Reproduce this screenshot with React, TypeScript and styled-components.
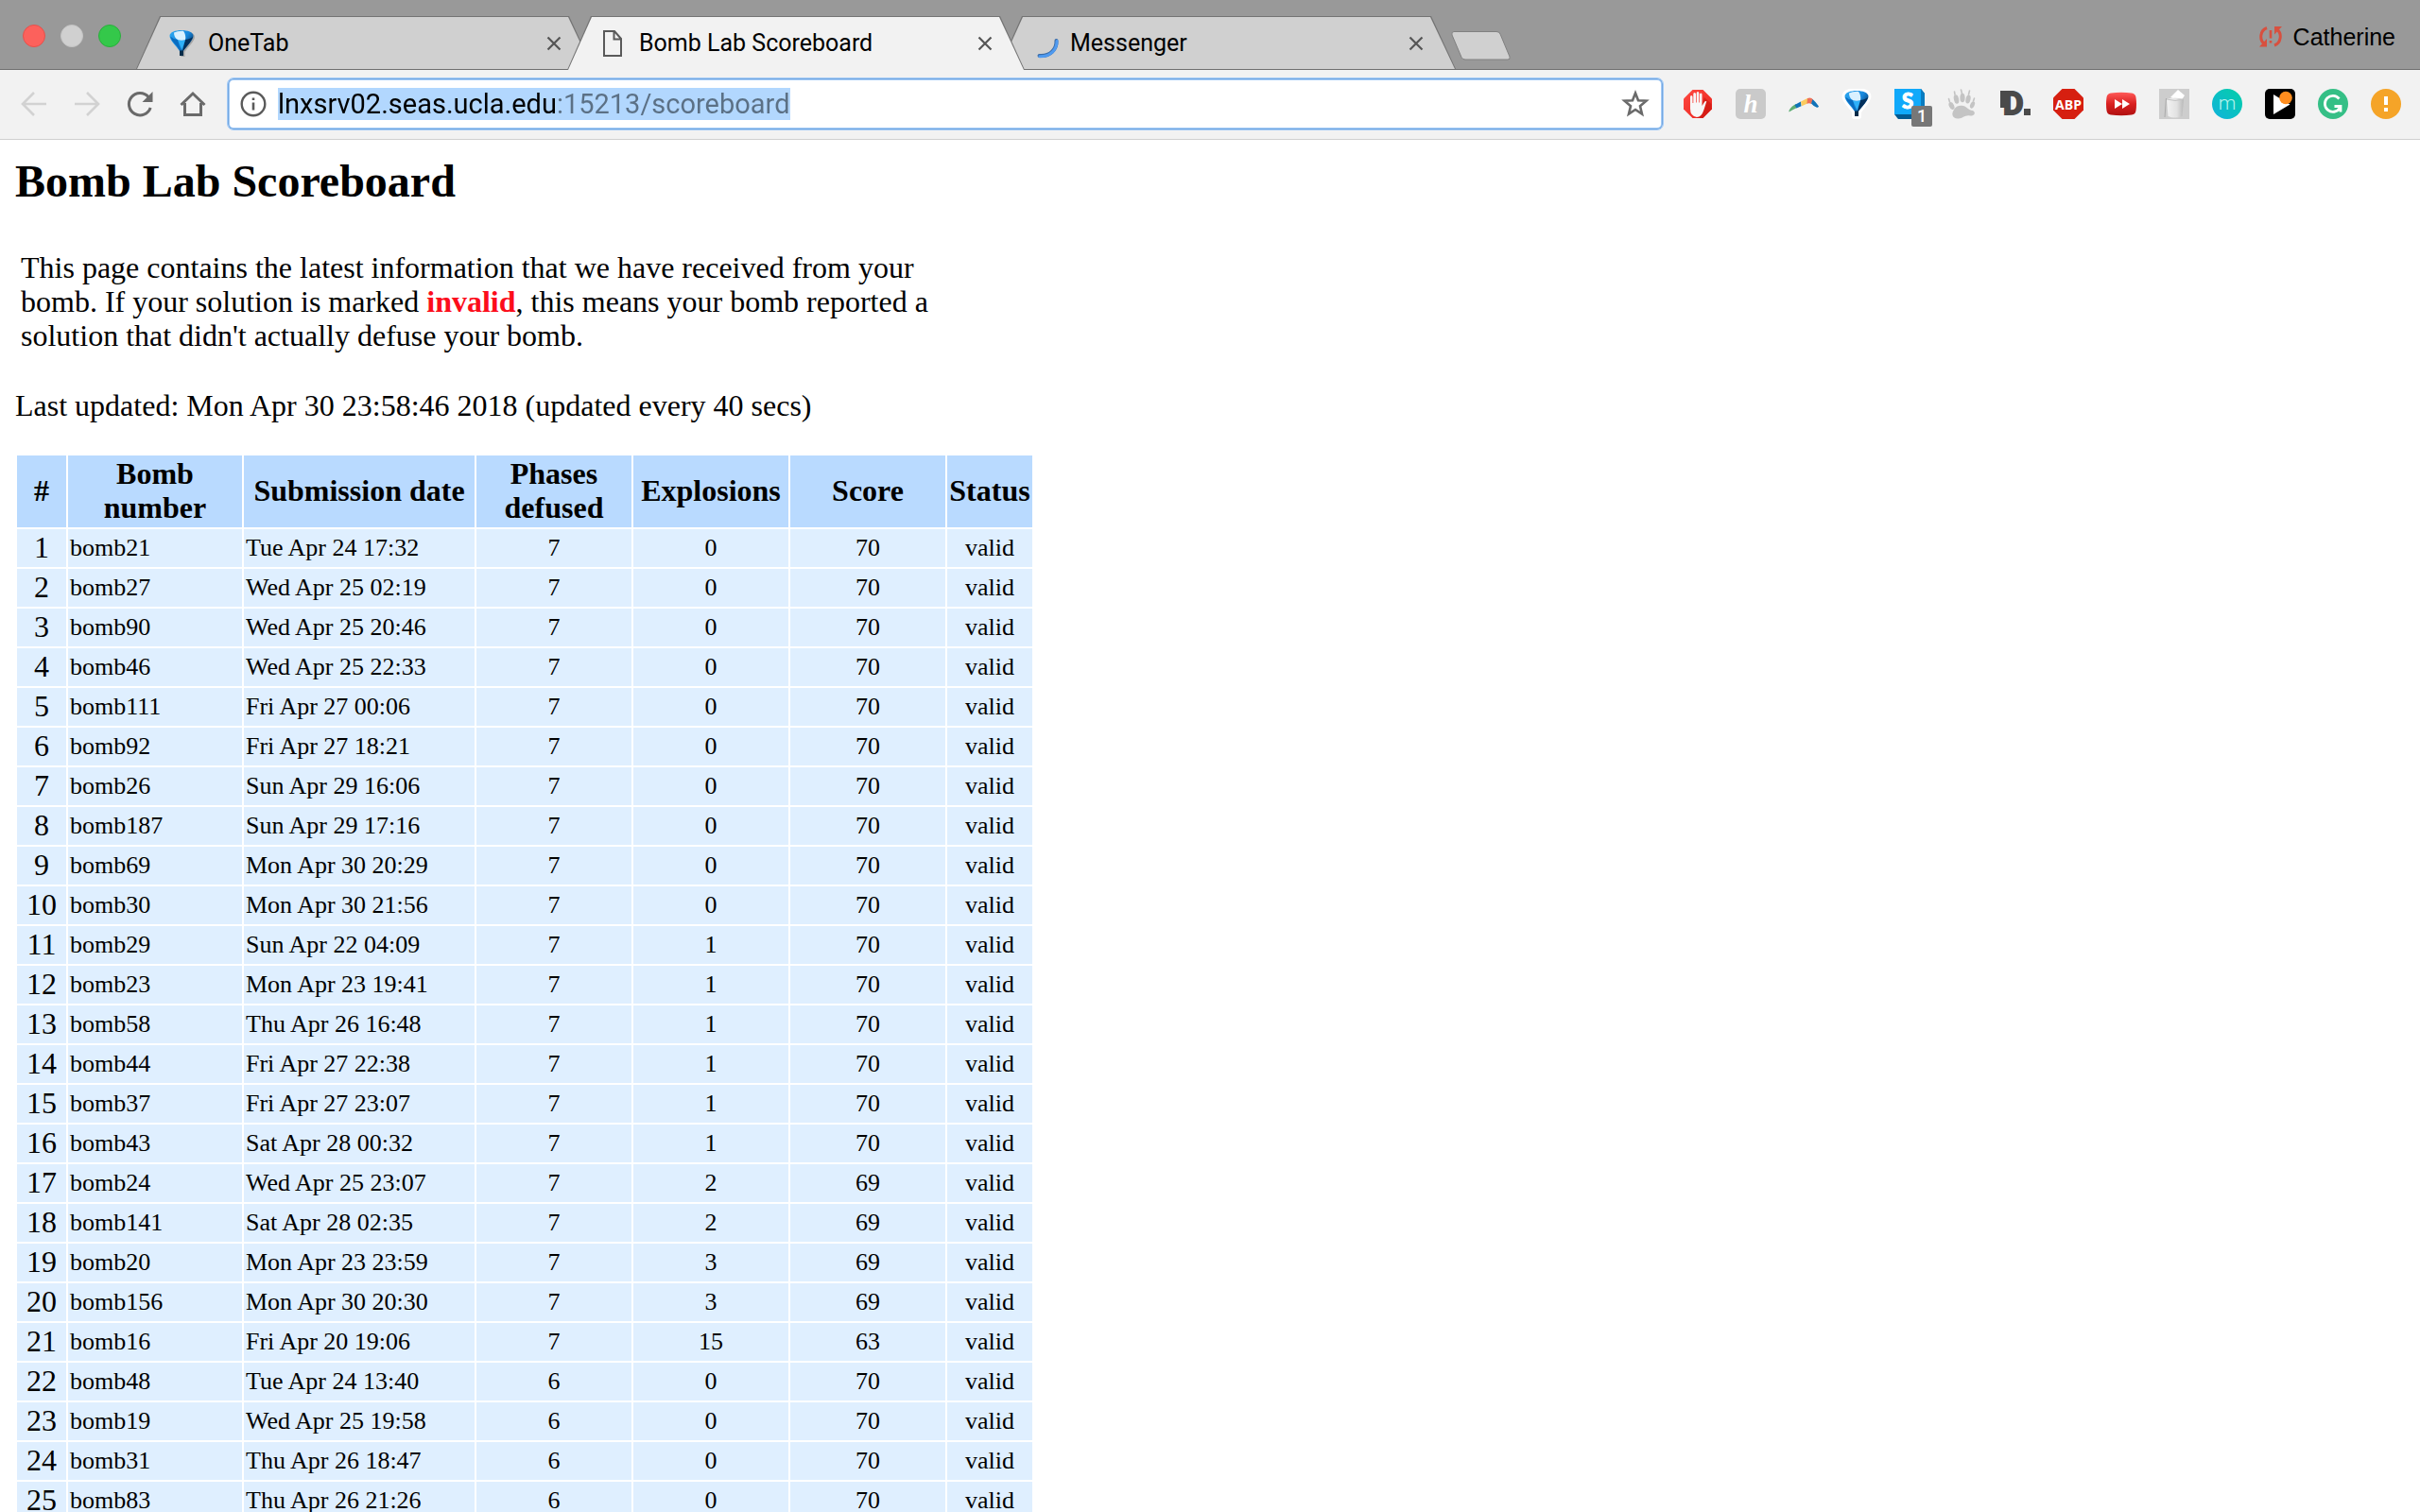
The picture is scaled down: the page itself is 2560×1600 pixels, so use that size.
import React from "react";
import styled, { createGlobalStyle, css } from "styled-components";

const sans = `Roboto, "Liberation Sans", sans-serif`;
const serif = `"Liberation Serif", "Times New Roman", serif`;

const GlobalStyle = createGlobalStyle`
  * { box-sizing: border-box; }
  body { margin: 0; background: #fff; color: #000; }
`;

const Window = styled.div`
  display: flex;
  flex-direction: column;
  height: 100vh;
  overflow: hidden;
`;

/* ---------- tab strip ---------- */

const TabStrip = styled.header`
  display: flex;
  align-items: flex-end;
  flex: none;
  height: 74px;
  padding: 0 26px 0 24px;
  background: #999;
  box-shadow: inset 0 -1px #6f6f6f;
  font-family: ${sans};
`;

const WindowButtons = styled.div`
  display: flex;
  gap: 16px;
  align-self: flex-start;
  margin-top: 26px;
  width: 120px;
`;

const Light = styled.button<{ $fill: string; $edge: string }>`
  width: 24px;
  height: 24px;
  padding: 0;
  border: 1px solid ${(p) => p.$edge};
  border-radius: 50%;
  background: ${(p) => p.$fill};
`;

const Tabs = styled.nav`
  display: flex;
  align-items: flex-end;
  flex: 0 1 1396px;
  min-width: 0;
`;

const slant = "polygon(25px 0, calc(100% - 26px) 0, 100% 100%, 0 100%)";

const Tab = styled.div<{ $active?: boolean }>`
  position: relative;
  isolation: isolate;
  display: flex;
  align-items: center;
  flex: 1 1 0;
  min-width: 0;
  height: 57px;
  padding: 0 32px;
  z-index: ${(p) => (p.$active ? 2 : 1)};
  & + & { margin-left: -28px; }
  &::before, &::after {
    content: "";
    position: absolute;
    z-index: -1;
    clip-path: ${slant};
  }
  &::before { inset: 0 0 ${(p) => (p.$active ? 0 : 1)}px; background: #747474; }
  &::after {
    inset: 1px 1px ${(p) => (p.$active ? 0 : 1)}px;
    background: ${(p) => (p.$active ? "#f2f2f2" : "#d0d0d0")};
  }
`;

const TabTitle = styled.a`
  flex: 1;
  margin-left: 12px;
  overflow: hidden;
  white-space: nowrap;
  font-size: 25px;
  line-height: 32px;
  color: #000;
  text-decoration: none;
`;

const IconButton = styled.button<{ $size: number }>`
  display: grid;
  place-items: center;
  flex: none;
  width: ${(p) => p.$size}px;
  height: ${(p) => p.$size}px;
  padding: 0;
  border: 0;
  background: none;
`;

const NewTab = styled.button`
  align-self: flex-start;
  flex: none;
  width: 66px;
  height: 32px;
  margin: 32px auto 0 -7px;
  padding: 0;
  border: 0;
  background: none;
`;

const Profile = styled.button`
  display: flex;
  align-items: center;
  gap: 12px;
  align-self: flex-start;
  margin-top: 23px;
  padding: 0;
  border: 0;
  background: none;
  font: 25px/32px "Liberation Sans", Arial, sans-serif;
  color: #000;
`;

/* ---------- toolbar ---------- */

const Toolbar = styled.div`
  display: flex;
  align-items: center;
  flex: none;
  height: 74px;
  padding: 0 20px 1px 16px;
  gap: 20px;
  background: #f2f2f2;
  border-bottom: 1px solid #d0d0d0;
`;

const Navigation = styled.div`
  display: flex;
  gap: 16px;
  margin-right: -4px;
`;

const AddressBar = styled.label`
  display: flex;
  align-items: center;
  flex: 1;
  height: 56px;
  padding: 0 12px 0 11px;
  border: 1px solid #a5ccf7;
  border-radius: 7px;
  background: #fff;
  box-shadow: inset 0 0 0 1px #74a7e0, inset 0 0 0 2px #a5ccf7;
`;

const domainWidth = 295;

const Address = styled.input`
  field-sizing: content;
  height: 34px;
  margin: 0 auto 0 10px;
  padding: 0;
  border: 0;
  outline: 0;
  font: 29px/34px ${sans};
  color: transparent;
  background:
    linear-gradient(90deg, #000 ${domainWidth}px, #5b7085 ${domainWidth}px) text,
    #b2d7fe;
  background-clip: text, border-box;
`;

const Extensions = styled.div`
  display: flex;
  gap: 24px;
`;

const Extension = styled.button`
  position: relative;
  width: 32px;
  height: 32px;
  padding: 0;
  border: 0;
  background: none;
  svg { display: block; }
`;

const Badge = styled.span`
  position: absolute;
  left: 18px;
  top: 18px;
  width: 22px;
  height: 22px;
  border-radius: 2px;
  background: #777;
  color: #fff;
  font: 500 18px/22px ${sans};
  text-align: center;
`;

/* ---------- page ---------- */

const Page = styled.main`
  flex: 1;
  min-height: 0;
  overflow: hidden;
  padding: 16px;
  font: 32px/36px ${serif};
`;

const Heading = styled.h2`
  margin: 0 0 40px;
  font-size: 48px;
  line-height: 55px;
`;

const Intro = styled.p`
  max-width: 1012px;
  margin: 0 0 32px;
  padding: 6px;
`;

const Invalid = styled.b`
  color: #fc0d1b;
`;

const Updated = styled.p`
  margin: 0 0 32px;
  line-height: 37px;
`;

const Scoreboard = styled.table`
  table-layout: fixed;
  width: 1078px;
  border-spacing: 2px;
`;

const Col = styled.col<{ $width: number }>`
  width: ${(p) => p.$width}px;
`;

const HeadCell = styled.th`
  padding: 1px 2px 3px;
  background: #b9daff;
`;

const cell = css`
  height: 40px;
  background: #dfefff;
`;

const Rank = styled.td`
  ${cell}
  padding: 1px 2px 3px;
  text-align: center;
`;

const Cell = styled.td<{ $left?: boolean }>`
  ${cell}
  padding: 2px;
  font-size: 26px;
  text-align: ${(p) => (p.$left ? "left" : "center")};
`;

const columns: [string, number][] = [
  ["#", 52],
  ["Bomb number", 184],
  ["Submission date", 244],
  ["Phases defused", 164],
  ["Explosions", 164],
  ["Score", 164],
  ["Status", 90],
];

const rows: [string, string, number, number, number][] = [
  ["bomb21", "Tue Apr 24 17:32", 7, 0, 70],
  ["bomb27", "Wed Apr 25 02:19", 7, 0, 70],
  ["bomb90", "Wed Apr 25 20:46", 7, 0, 70],
  ["bomb46", "Wed Apr 25 22:33", 7, 0, 70],
  ["bomb111", "Fri Apr 27 00:06", 7, 0, 70],
  ["bomb92", "Fri Apr 27 18:21", 7, 0, 70],
  ["bomb26", "Sun Apr 29 16:06", 7, 0, 70],
  ["bomb187", "Sun Apr 29 17:16", 7, 0, 70],
  ["bomb69", "Mon Apr 30 20:29", 7, 0, 70],
  ["bomb30", "Mon Apr 30 21:56", 7, 0, 70],
  ["bomb29", "Sun Apr 22 04:09", 7, 1, 70],
  ["bomb23", "Mon Apr 23 19:41", 7, 1, 70],
  ["bomb58", "Thu Apr 26 16:48", 7, 1, 70],
  ["bomb44", "Fri Apr 27 22:38", 7, 1, 70],
  ["bomb37", "Fri Apr 27 23:07", 7, 1, 70],
  ["bomb43", "Sat Apr 28 00:32", 7, 1, 70],
  ["bomb24", "Wed Apr 25 23:07", 7, 2, 69],
  ["bomb141", "Sat Apr 28 02:35", 7, 2, 69],
  ["bomb20", "Mon Apr 23 23:59", 7, 3, 69],
  ["bomb156", "Mon Apr 30 20:30", 7, 3, 69],
  ["bomb16", "Fri Apr 20 19:06", 7, 15, 63],
  ["bomb48", "Tue Apr 24 13:40", 6, 0, 70],
  ["bomb19", "Wed Apr 25 19:58", 6, 0, 70],
  ["bomb31", "Thu Apr 26 18:47", 6, 0, 70],
  ["bomb83", "Thu Apr 26 21:26", 6, 0, 70],
];

/* ---------- drawings ---------- */

const Svg = ({ size = 32, children }: { size?: number; children: React.ReactNode }) => (
  <svg width={size} height={size} viewBox={`0 0 ${size} ${size}`} fill="none" aria-hidden="true">
    {children}
  </svg>
);

const Balloon = ({ id, halo }: { id: string; halo?: boolean }) => {
  const shape = "M16 2C9.500 2 3.500 4 3.500 8C3.500 12.500 10 18 14 24V29H18V24C22 18 28.500 12.500 28.500 8C28.500 4 22.500 2 16 2Z";
  return (
    <Svg>
      <defs>
        <linearGradient id={id} x1="4" y1="4" x2="26" y2="20" gradientUnits="userSpaceOnUse">
          <stop offset="0" stopColor="#2ba6f0" />
          <stop offset=".6" stopColor="#1787dc" />
          <stop offset="1" stopColor="#053c70" />
        </linearGradient>
      </defs>
      <path d={shape} transform="translate(1.500 1)" fill="#0003" />
      {halo && <path d={shape} stroke="#fff" strokeWidth="6" strokeLinejoin="round" />}
      <path d={shape} fill={`url(#${id})`} />
      <path d="M20 12Q26 11 28 8.500Q27.500 13 17 24.500Z" fill="#04305c" />
      <path d="M4 8.500Q8 12 12 12L15 24Q10 17 6 13Z" fill="#0a6cc0" />
      <path d="M12 12Q16 13.500 20 12L16.500 23Z" fill="#2fb0f8" />
      <path d="M8 4.500Q12 2.500 18 2.800Q21 7 20 12Q16 13.500 12 12Q8 10 8 4.500Z" fill="#d9f1ff" />
      <path d="M14 23.500H18V29H14Z" fill="#062c49" />
    </Svg>
  );
};

const PageIcon = () => (
  <Svg>
    <path d="M7 3H18L25 11V29H7Z M17.500 3V11.500H25" stroke="#5a5a5a" strokeWidth="2" />
  </Svg>
);

const Spinner = () => (
  <Svg>
    <path d="M29.500 13C30 22 23 30 11.500 29" stroke="#3a6ba6" strokeWidth="4" strokeLinecap="round" />
    <path d="M30 13.500C30.300 22.500 23 30 12 29.800" stroke="#4f9af0" strokeWidth="3" strokeLinecap="round" />
  </Svg>
);

const Close = () => (
  <IconButton $size={20} aria-label="Close tab">
    <Svg size={20}>
      <path d="M3.500 3.500L16.500 16.500M16.500 3.500L3.500 16.500" stroke="#555" strokeWidth="2.200" />
    </Svg>
  </IconButton>
);

const octagon = "M10.500 1H21.500L31 10.500V21.500L21.500 31H10.500L1 21.500V10.500Z";

const extensionIcons: [string, React.ReactNode][] = [
  ["AdBlock", (
    <Svg>
      <defs>
        <linearGradient id="stop" x1="0" y1="0" x2="1" y2="1">
          <stop offset="0" stopColor="#ff4a42" />
          <stop offset="1" stopColor="#e8201a" />
        </linearGradient>
      </defs>
      <path d={octagon} fill="url(#stop)" />
      <path d="M23 9L30.500 16V21.500L21.500 31H15Z" fill="#c6160f" opacity=".6" />
      <path
        d="M8 17V8.500Q8 7 9.200 7T10.500 8.500V15H11.300V5.500Q11.300 4 12.600 4T14 5.500V14.500H14.700V4.500Q14.700 3 16 3T17.300 4.500V14.500H18V6Q18 4.500 19.300 4.500T20.500 6V18L23 14Q24 12.500 25.300 13.300L22.500 22Q20 30 15 30Q8 29 8 21Z"
        fill="#f7f7f7"
      />
    </Svg>
  )],
  ["Honey", (
    <Svg>
      <rect width="32" height="32" rx="5" fill="#cacaca" />
      <text x="16" y="25" textAnchor="middle" fill="#fff" fontFamily="Liberation Serif, serif" fontStyle="italic" fontWeight="700" fontSize="27">h</text>
    </Svg>
  )],
  ["Boomerang", (
    <Svg>
      <path d="M.5 23C2 19.500 5 17.500 8 16L9 20Q5 21.500 .5 24.500Z" fill="#5fae74" />
      <path d="M6.500 17L13 13.500L13.500 18.300L8.500 20.500Z" fill="#1072b8" />
      <path d="M13 13.500L20 10V15.500L14 18.300Z" fill="#fbcb5f" />
      <path d="M20 10Q24 8.500 26 11.500L24 16Q22 14.500 19.500 15.700Z" fill="#ee7057" />
      <path d="M25.500 11Q29 14 32 18.500Q31 20.500 29.500 19.500Q26 18 24 15.500Z" fill="#1072b8" />
    </Svg>
  )],
  ["OneTab", <Balloon id="balloon-ext" halo />],
  ["Skype", (
    <>
      <Svg>
        <path d="M0 0H28L32 5V32H4L0 27Z" fill="#035a91" />
        <path d="M28 0L32 5V28H28Z" fill="#0a7cc0" />
        <rect width="28" height="27" fill="#10a9fa" />
        <text x="14" y="21" textAnchor="middle" fill="#fff" stroke="#fff" fontFamily="Lato, sans-serif" fontWeight="900" fontSize="22">S</text>
      </Svg>
      <Badge>1</Badge>
    </>
  )],
  ["Bear paw", (
    <Svg>
      <g fill="#c4c4c4">
        <ellipse cx="4.500" cy="18" rx="2.600" ry="4.200" transform="rotate(-25 4.500 18)" />
        <ellipse cx="9.500" cy="11" rx="2.600" ry="4.800" transform="rotate(-12 9.500 11)" />
        <ellipse cx="16" cy="9.500" rx="2.600" ry="4.800" />
        <ellipse cx="22" cy="11" rx="2.500" ry="4.600" transform="rotate(12 22 11)" />
        <ellipse cx="26.500" cy="17" rx="2.200" ry="3.800" transform="rotate(25 26.500 17)" />
        <path d="M7 22C9 18 13 17 17 18C21 19 22 22.500 27 23C31 25.500 28 29 24 28.500C18 27.500 16 32 11 31.500C5 31 4 26.500 7 22Z" />
      </g>
      <path d="M2.500 14L1.500 10.500M8 6L7.500 3M15.500 5L14.500 1M22.500 6L23.500 2M27.500 13L28.500 10" stroke="#c4c4c4" strokeWidth="1.600" strokeLinecap="round" />
    </Svg>
  )],
  ["Disconnect", (
    <Svg>
      <rect y="2" width="9" height="18" fill="#4a4a4a" />
      <text x="3" y="27" fill="#4a4a4a" stroke="#4a4a4a" strokeWidth="2" fontFamily="Roboto, sans-serif" fontWeight="700" fontSize="33">D</text>
      <rect x="25" y="21" width="7" height="7" fill="#4a4a4a" />
    </Svg>
  )],
  ["Adblock Plus", (
    <Svg>
      <path d="M9.500 0H22.500L32 9.500V22.500L22.500 32H9.500L0 22.500V9.500Z" fill="#d61f10" />
      <text x="16" y="21.500" textAnchor="middle" fill="#fff" fontFamily="Open Sans, sans-serif" fontWeight="700" fontSize="14">ABP</text>
    </Svg>
  )],
  ["Video skip", (
    <Svg>
      <defs>
        <linearGradient id="red" x1="0" y1="0" x2="0" y2="1">
          <stop offset="0" stopColor="#ff5a58" />
          <stop offset=".5" stopColor="#d92020" />
          <stop offset="1" stopColor="#b01010" />
        </linearGradient>
      </defs>
      <path d="M5 4.500Q16 3 27 4.500Q31 5 31.500 9Q32.500 16 31.500 23Q31 27 27 27.500Q16 29 5 27.500Q1 27 .5 23Q-.5 16 .5 9Q1 5 5 4.500Z" fill="url(#red)" />
      <path d="M9 11L17 16L9 21ZM17 11L25 16L17 21Z" fill="#fff" />
    </Svg>
  )],
  ["Poper", (
    <Svg>
      <defs>
        <linearGradient id="can" x1="0" y1="0" x2="1" y2="0">
          <stop offset="0" stopColor="#f2f2f2" />
          <stop offset=".6" stopColor="#e2e2e2" />
          <stop offset="1" stopColor="#b8b8b8" />
        </linearGradient>
      </defs>
      <rect width="32" height="32" fill="#cdcdcd" />
      <path d="M12 9L20 1L27 7L23 13Z" fill="#fff" />
      <path d="M8 11Q16 8 26 11L24.500 29Q17 32 9.500 29Z" fill="url(#can)" />
      <path d="M8 11Q17 14 26 11" stroke="#c4c4c4" />
      <path d="M7.500 10L6 30" stroke="#aaa" />
    </Svg>
  )],
  ["Momentum", (
    <Svg>
      <defs>
        <linearGradient id="teal" x1="0" y1="1" x2="1" y2="0">
          <stop offset="0" stopColor="#10b2dc" />
          <stop offset="1" stopColor="#04cfa8" />
        </linearGradient>
      </defs>
      <circle cx="16" cy="16" r="16" fill="url(#teal)" />
      <text x="16" y="22" textAnchor="middle" fill="#b6f2ee" fontFamily="Roboto, sans-serif" fontWeight="300" fontSize="21">m</text>
    </Svg>
  )],
  ["Player", (
    <Svg>
      <rect width="32" height="32" rx="5" fill="#000" />
      <path d="M9 6L26.500 16.500L9 27Z" fill="#fff" />
      <circle cx="22" cy="9.500" r="6.800" fill="#ff8d1e" />
    </Svg>
  )],
  ["Grammarly", (
    <Svg>
      <circle cx="16" cy="16" r="16" fill="#35bf86" />
      <path d="M22.500 10.500A8.500 8.500 0 1 0 23 20.500M17.500 18.500H24V24.500" stroke="#fff" strokeWidth="2.800" />
    </Svg>
  )],
  ["Alert", (
    <Svg>
      <circle cx="16" cy="16" r="16" fill="#f5a428" />
      <path d="M14 8H18V17H14ZM14 20H18V24H14Z" fill="#fff" />
    </Svg>
  )],
];

export default function App() {
  return (
    <Window>
      <GlobalStyle />
      <TabStrip>
        <WindowButtons>
          <Light $fill="#fc615c" $edge="#e5504b" aria-label="Close window" />
          <Light $fill="#d0d0d0" $edge="#c4c4c4" aria-label="Minimize window" />
          <Light $fill="#34c84a" $edge="#2aae3c" aria-label="Zoom window" />
        </WindowButtons>
        <Tabs>
          <Tab>
            <Balloon id="balloon-tab" />
            <TabTitle href="#onetab">OneTab</TabTitle>
            <Close />
          </Tab>
          <Tab $active>
            <PageIcon />
            <TabTitle href="#scoreboard">Bomb Lab Scoreboard</TabTitle>
            <Close />
          </Tab>
          <Tab>
            <Spinner />
            <TabTitle href="#messenger">Messenger</TabTitle>
            <Close />
          </Tab>
        </Tabs>
        <NewTab aria-label="New tab">
          <svg width="66" height="32" viewBox="0 0 66 32">
            <path d="M5 1.500H50Q53 1.500 54 4L64 28Q65 31 62 31H17Q14 31 13 28.500L3 5Q2 1.500 5 1.500Z" fill="#d0d0d0" stroke="#808080" />
          </svg>
        </NewTab>
        <Profile>
          <Svg size={24}>
            <path d="M8 2.500C1 5 -.5 15 5.500 19.500M16 21C23 18.500 24.500 8.500 18.500 4" stroke="#d8503f" strokeWidth="3" />
            <path d="M0 22.500H8V14ZM24 1H16V9.500Z" fill="#d8503f" />
            <path d="M10.700 5H13.300V13.500H10.700ZM10.700 16H13.300V18.500H10.700Z" fill="#d8503f" />
          </Svg>
          Catherine
        </Profile>
      </TabStrip>
      <Toolbar>
        <Navigation>
          <IconButton $size={40} aria-label="Back">
            <Svg><path d="M29 16H5M16 4L4 16L16 28" stroke="#d2d2d2" strokeWidth="2.600" /></Svg>
          </IconButton>
          <IconButton $size={40} aria-label="Forward">
            <Svg><path d="M3 16H27M16 4L28 16L16 28" stroke="#d2d2d2" strokeWidth="2.600" /></Svg>
          </IconButton>
          <IconButton $size={40} aria-label="Reload">
            <Svg>
              <path d="M25 8.500A11.700 11.700 0 1 0 27.200 20" stroke="#6a6a6a" strokeWidth="3" />
              <path d="M29.500 3V14H18.500Z" fill="#6a6a6a" />
            </Svg>
          </IconButton>
          <IconButton $size={40} aria-label="Home">
            <Svg><path d="M3.500 17L16 5L28.500 17M7.500 15V27.500H24.500V15" stroke="#6a6a6a" strokeWidth="3" /></Svg>
          </IconButton>
        </Navigation>
        <AddressBar>
          <Svg>
            <circle cx="16" cy="16" r="12.300" stroke="#5a5a5a" strokeWidth="2.400" />
            <path d="M14.700 9.500H17.300V12H14.700ZM14.700 14.500H17.300V22.500H14.700Z" fill="#5a5a5a" />
          </Svg>
          <Address aria-label="Address" defaultValue="lnxsrv02.seas.ucla.edu:15213/scoreboard" />
          <IconButton $size={32} aria-label="Bookmark this page">
            <Svg>
              <path d="M15 4.500L18 12.200L26.500 12.700L20 18.200L22 26.700L15 22L8 26.700L10 18.200L3.500 12.700L12 12.200Z" stroke="#6a6a6a" strokeWidth="2.600" />
            </Svg>
          </IconButton>
        </AddressBar>
        <Extensions>
          {extensionIcons.map(([name, icon]) => (
            <Extension key={name} aria-label={name}>{icon}</Extension>
          ))}
        </Extensions>
      </Toolbar>
      <Page>
        <Heading>Bomb Lab Scoreboard</Heading>
        <Intro>
          This page contains the latest information that we have received from your bomb. If your
          solution is marked <Invalid>invalid</Invalid>, this means your bomb reported a solution
          that didn't actually defuse your bomb.
        </Intro>
        <Updated>Last updated: Mon Apr 30 23:58:46 2018 (updated every 40 secs)</Updated>
        <Scoreboard>
          <colgroup>
            {columns.map(([title, width]) => <Col key={title} $width={width} />)}
          </colgroup>
          <thead>
            <tr>{columns.map(([title]) => <HeadCell key={title} scope="col">{title}</HeadCell>)}</tr>
          </thead>
          <tbody>
            {rows.map(([bomb, date, phases, explosions, score], i) => (
              <tr key={bomb}>
                <Rank>{i + 1}</Rank>
                <Cell $left>{bomb}</Cell>
                <Cell $left>{date}</Cell>
                <Cell>{phases}</Cell>
                <Cell>{explosions}</Cell>
                <Cell>{score}</Cell>
                <Cell>valid</Cell>
              </tr>
            ))}
          </tbody>
        </Scoreboard>
      </Page>
    </Window>
  );
}
